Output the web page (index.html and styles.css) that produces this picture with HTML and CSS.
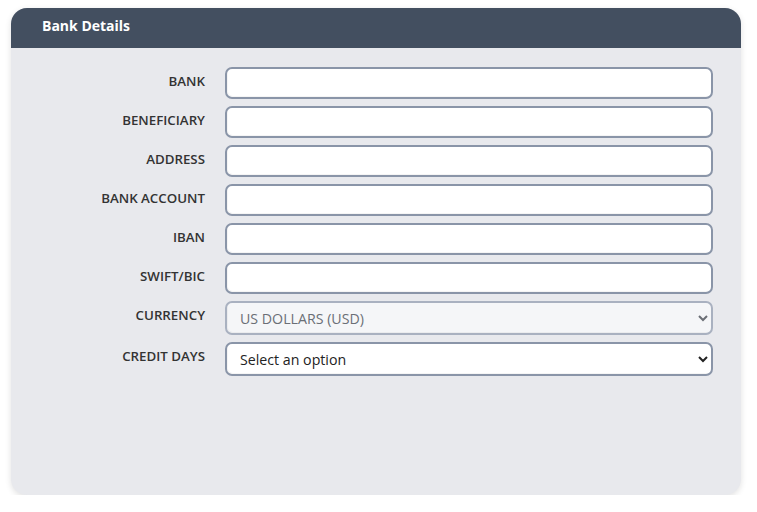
FILE: index.html
```html
<!DOCTYPE html>
<html lang="en">
<head>
  <meta charset="UTF-8" />
  <meta name="viewport" content="width=device-width, initial-scale=1.0"/>
  <title>Bank Details</title>
  <link rel="stylesheet" href="styles.css">
</head>
<body>

<div class="card">
  <div class="card-header">Bank Details</div>

  <div class="card-body">
    <div class="form-row">
      <label for="bank">BANK</label>
      <input type="text" id="bank" />
    </div>
    <div class="form-row">
      <label for="beneficiary">BENEFICIARY</label>
      <input type="text" id="beneficiary" />
    </div>
    <div class="form-row">
      <label for="address">ADDRESS</label>
      <input type="text" id="address" />
    </div>
    <div class="form-row">
      <label for="account">BANK ACCOUNT</label>
      <input type="text" id="account" />
    </div>
    <div class="form-row">
      <label for="iban">IBAN</label>
      <input type="text" id="iban" />
    </div>
    <div class="form-row">
      <label for="swift">SWIFT/BIC</label>
      <input type="text" id="swift" />
    </div>
    <div class="form-row">
      <label for="currency">CURRENCY</label>
      <select id="currency" class="disabled">
        <option>US DOLLARS (USD)</option>
      </select>
    </div>
    <div class="form-row">
      <label for="creditDays">CREDIT DAYS</label>
      <select id="creditDays">
        <option>Select an option</option>
        <option>30</option>
        <option>60</option>
        <option>90</option>
      </select>
    </div>
  </div>
</div>

</body>
</html>
```

FILE: styles.css
```css
body {
  font-family: "Open Sans", "Noto Sans", sans-serif;
  background: #fff;
  margin: 0;
  padding: 8px 0 0 11px;
}
.card {
  width: 730px;
  height: 487px;
  background: #e8e9ed;
  border-radius: 16px;
  overflow: hidden;
  box-shadow: 0 2px 6px rgba(0,0,0,0.12);
}
.card-header {
  background: #434f60;
  color: #fff;
  height: 40px;
  line-height: 36px;
  padding-left: 31px;
  font-size: 14px;
  font-weight: 700;
}
.card-body {
  padding-top: 19px;
}
.form-row {
  display: grid;
  grid-template-columns: 194px 488px;
  column-gap: 20px;
  margin-bottom: 7px;
}
label {
  text-align: right;
  font-size: 13.3px;
  font-weight: 600;
  color: #333;
  padding-top: 5px;
}
input, select {
  box-sizing: border-box;
  width: 100%;
  height: 32px;
  border: 2px solid #8a95a8;
  border-radius: 7px;
  background: #fff;
  font-family: inherit;
  font-size: 14.2px;
  color: #222;
  padding: 0 9px;
  box-shadow: inset 1px -1px 0 rgba(0,0,0,0.04);
}
select {
  height: 34px;
}
select.disabled {
  background: #f5f6f8;
  color: #6b6f76;
  border-color: #a9b1c0;
}
```
